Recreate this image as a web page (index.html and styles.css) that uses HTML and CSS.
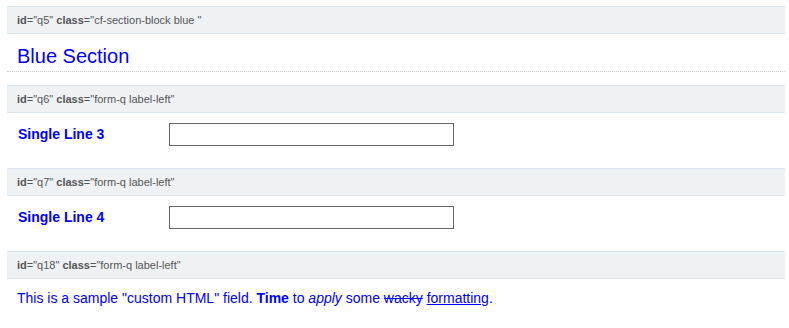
FILE: index.html
```html
<!DOCTYPE html>
<html lang="en">

<head>
	<meta charset="UTF-8" />
	<meta name="viewport" content="width=device-width, initial-scale=1.0" />
	<title>Form Sections</title>
	<link rel="stylesheet" href="styles.css">
</head>

<body>
	<div class="form">
		<div class="block">
			<div class="block-head"><b>id</b>="q5" <b>class</b>="cf-section-block blue "</div>
			<div class="section-title">Blue Section</div>
		</div>

		<div class="block">
			<div class="block-head"><b>id</b>="q6" <b>class</b>="form-q label-left"</div>
			<div class="field-row">
				<label class="field-label" for="q6">Single Line 3</label>
				<input id="q6" type="text" class="field-input" />
			</div>
		</div>

		<div class="block">
			<div class="block-head"><b>id</b>="q7" <b>class</b>="form-q label-left"</div>
			<div class="field-row">
				<label class="field-label" for="q7">Single Line 4</label>
				<input id="q7" type="text" class="field-input" />
			</div>
		</div>

		<div class="block">
			<div class="block-head"><b>id</b>="q18" <b>class</b>="form-q label-left"</div>
			<div class="custom-html">
				This is a sample "custom HTML" field. <b>Time</b> to <i>apply</i> some <s>wacky</s> <u>formatting</u>.
			</div>
		</div>
	</div>
</body>

</html>
```

FILE: styles.css
```css
body {
	font-family: 'Liberation Sans', Arial, sans-serif;
	background: #fff;
	margin: 0;
	padding: 6px 4px 0 7px;
}

.block-head {
	height: 26px;
	line-height: 26px;
	padding-left: 10px;
	background: #eff2f5;
	border-top: 1px solid #dbe5ef;
	border-bottom: 1px solid #dbe5ef;
	font-size: 11px;
	color: #555;
}

.block-head b {
	font-weight: bold;
}

.section-title {
	font-size: 20px;
	color: #0000ff;
	padding: 11px 10px 0;
	height: 26px;
	border-bottom: 1px dotted #ccc;
	margin-bottom: 13px;
}

.field-row {
	display: flex;
	align-items: center;
	padding: 10px 10px 22px 11px;
}

.field-label {
	width: 151px;
	padding-bottom: 2px;
	font-size: 14px;
	font-weight: bold;
	color: #0000ff;
}

.field-input {
	width: 283px;
	height: 21px;
	padding: 0;
	margin: 0;
	border: 1px solid #666;
	font-size: 13px;
}

.custom-html {
	padding: 11px 10px;
	font-size: 14px;
	color: #0000ff;
}
```
